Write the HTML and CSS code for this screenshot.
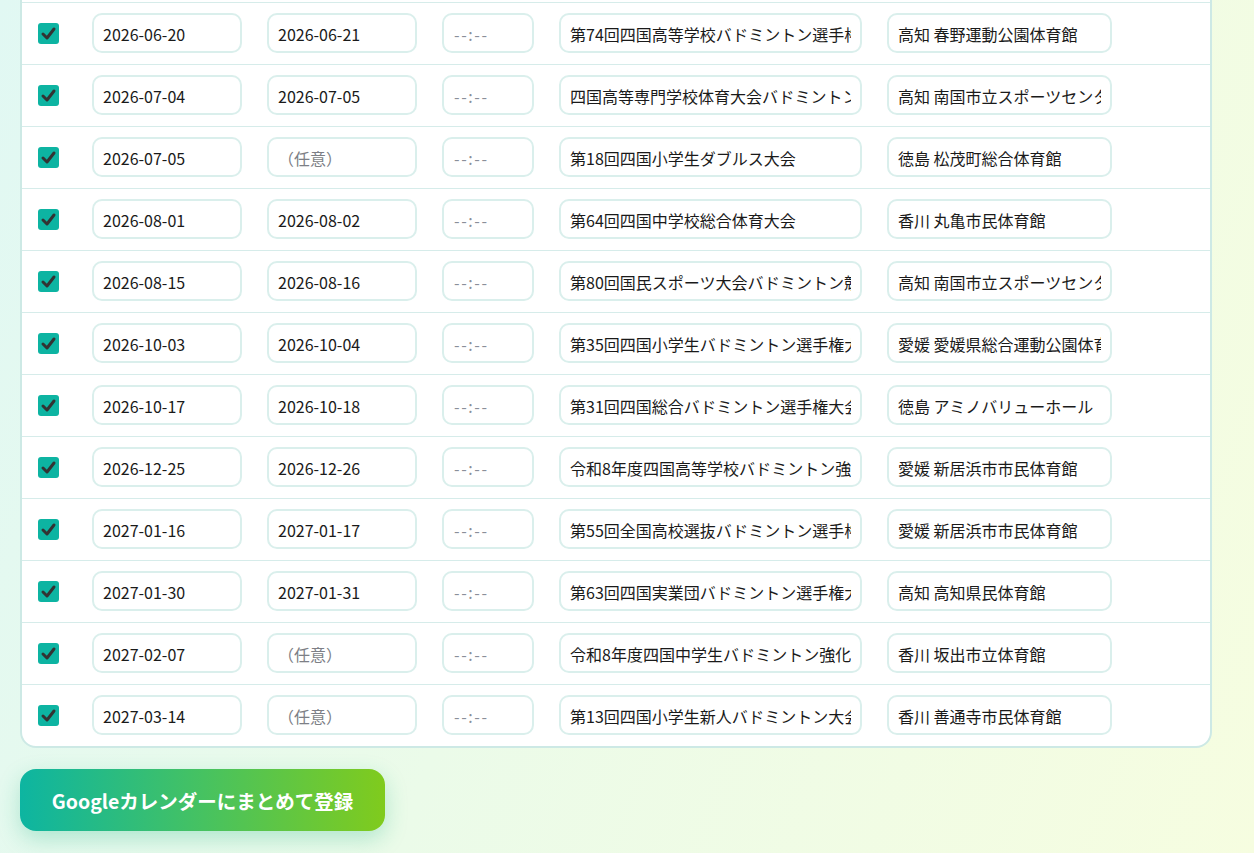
FILE: index.html
```html
<!DOCTYPE html>
<html lang="ja">
<head>
<meta charset="utf-8">
<title>大会一覧</title>
<link rel="stylesheet" href="styles.css">
</head>
<body>
<main class="page">
  <section class="card">
    <div class="row">
      <span class="check"><svg viewBox="0 0 21 21" width="21" height="21"><path d="M5 11 L9 15 L16 6" fill="none" stroke="#333" stroke-width="3" stroke-linecap="round" stroke-linejoin="round"/></svg></span>
      <input class="field" type="text" value="2026-06-13">
      <input class="field" type="text" value="2026-06-14">
      <input class="field time" type="text" placeholder="--:--">
      <input class="field" type="text" value="四国高等学校バドミントン選手権大会">
      <input class="field" type="text" value="徳島 鳴門アミノバリューホール">
    </div>
    <div class="row">
      <span class="check"><svg viewBox="0 0 21 21" width="21" height="21"><path d="M5 11 L9 15 L16 6" fill="none" stroke="#333" stroke-width="3" stroke-linecap="round" stroke-linejoin="round"/></svg></span>
      <input class="field" type="text" value="2026-06-20">
      <input class="field" type="text" value="2026-06-21">
      <input class="field time" type="text" placeholder="--:--">
      <input class="field" type="text" value="第74回四国高等学校バドミントン選手権大会">
      <input class="field" type="text" value="高知 春野運動公園体育館">
    </div>
    <div class="row">
      <span class="check"><svg viewBox="0 0 21 21" width="21" height="21"><path d="M5 11 L9 15 L16 6" fill="none" stroke="#333" stroke-width="3" stroke-linecap="round" stroke-linejoin="round"/></svg></span>
      <input class="field" type="text" value="2026-07-04">
      <input class="field" type="text" value="2026-07-05">
      <input class="field time" type="text" placeholder="--:--">
      <input class="field" type="text" value="四国高等専門学校体育大会バドミントン競技">
      <input class="field" type="text" value="高知 南国市立スポーツセンター">
    </div>
    <div class="row">
      <span class="check"><svg viewBox="0 0 21 21" width="21" height="21"><path d="M5 11 L9 15 L16 6" fill="none" stroke="#333" stroke-width="3" stroke-linecap="round" stroke-linejoin="round"/></svg></span>
      <input class="field" type="text" value="2026-07-05">
      <input class="field" type="text" placeholder="（任意）">
      <input class="field time" type="text" placeholder="--:--">
      <input class="field" type="text" value="第18回四国小学生ダブルス大会">
      <input class="field" type="text" value="徳島 松茂町総合体育館">
    </div>
    <div class="row">
      <span class="check"><svg viewBox="0 0 21 21" width="21" height="21"><path d="M5 11 L9 15 L16 6" fill="none" stroke="#333" stroke-width="3" stroke-linecap="round" stroke-linejoin="round"/></svg></span>
      <input class="field" type="text" value="2026-08-01">
      <input class="field" type="text" value="2026-08-02">
      <input class="field time" type="text" placeholder="--:--">
      <input class="field" type="text" value="第64回四国中学校総合体育大会">
      <input class="field" type="text" value="香川 丸亀市民体育館">
    </div>
    <div class="row">
      <span class="check"><svg viewBox="0 0 21 21" width="21" height="21"><path d="M5 11 L9 15 L16 6" fill="none" stroke="#333" stroke-width="3" stroke-linecap="round" stroke-linejoin="round"/></svg></span>
      <input class="field" type="text" value="2026-08-15">
      <input class="field" type="text" value="2026-08-16">
      <input class="field time" type="text" placeholder="--:--">
      <input class="field" type="text" value="第80回国民スポーツ大会バドミントン競技四国ブロック大会">
      <input class="field" type="text" value="高知 南国市立スポーツセンター">
    </div>
    <div class="row">
      <span class="check"><svg viewBox="0 0 21 21" width="21" height="21"><path d="M5 11 L9 15 L16 6" fill="none" stroke="#333" stroke-width="3" stroke-linecap="round" stroke-linejoin="round"/></svg></span>
      <input class="field" type="text" value="2026-10-03">
      <input class="field" type="text" value="2026-10-04">
      <input class="field time" type="text" placeholder="--:--">
      <input class="field" type="text" value="第35回四国小学生バドミントン選手権大会">
      <input class="field" type="text" value="愛媛 愛媛県総合運動公園体育館">
    </div>
    <div class="row">
      <span class="check"><svg viewBox="0 0 21 21" width="21" height="21"><path d="M5 11 L9 15 L16 6" fill="none" stroke="#333" stroke-width="3" stroke-linecap="round" stroke-linejoin="round"/></svg></span>
      <input class="field" type="text" value="2026-10-17">
      <input class="field" type="text" value="2026-10-18">
      <input class="field time" type="text" placeholder="--:--">
      <input class="field" type="text" value="第31回四国総合バドミントン選手権大会">
      <input class="field" type="text" value="徳島 アミノバリューホール">
    </div>
    <div class="row">
      <span class="check"><svg viewBox="0 0 21 21" width="21" height="21"><path d="M5 11 L9 15 L16 6" fill="none" stroke="#333" stroke-width="3" stroke-linecap="round" stroke-linejoin="round"/></svg></span>
      <input class="field" type="text" value="2026-12-25">
      <input class="field" type="text" value="2026-12-26">
      <input class="field time" type="text" placeholder="--:--">
      <input class="field" type="text" value="令和8年度四国高等学校バドミントン強化大会">
      <input class="field" type="text" value="愛媛 新居浜市市民体育館">
    </div>
    <div class="row">
      <span class="check"><svg viewBox="0 0 21 21" width="21" height="21"><path d="M5 11 L9 15 L16 6" fill="none" stroke="#333" stroke-width="3" stroke-linecap="round" stroke-linejoin="round"/></svg></span>
      <input class="field" type="text" value="2027-01-16">
      <input class="field" type="text" value="2027-01-17">
      <input class="field time" type="text" placeholder="--:--">
      <input class="field" type="text" value="第55回全国高校選抜バドミントン選手権大会四国地区予選">
      <input class="field" type="text" value="愛媛 新居浜市市民体育館">
    </div>
    <div class="row">
      <span class="check"><svg viewBox="0 0 21 21" width="21" height="21"><path d="M5 11 L9 15 L16 6" fill="none" stroke="#333" stroke-width="3" stroke-linecap="round" stroke-linejoin="round"/></svg></span>
      <input class="field" type="text" value="2027-01-30">
      <input class="field" type="text" value="2027-01-31">
      <input class="field time" type="text" placeholder="--:--">
      <input class="field" type="text" value="第63回四国実業団バドミントン選手権大会">
      <input class="field" type="text" value="高知 高知県民体育館">
    </div>
    <div class="row">
      <span class="check"><svg viewBox="0 0 21 21" width="21" height="21"><path d="M5 11 L9 15 L16 6" fill="none" stroke="#333" stroke-width="3" stroke-linecap="round" stroke-linejoin="round"/></svg></span>
      <input class="field" type="text" value="2027-02-07">
      <input class="field" type="text" placeholder="（任意）">
      <input class="field time" type="text" placeholder="--:--">
      <input class="field" type="text" value="令和8年度四国中学生バドミントン強化大会">
      <input class="field" type="text" value="香川 坂出市立体育館">
    </div>
    <div class="row">
      <span class="check"><svg viewBox="0 0 21 21" width="21" height="21"><path d="M5 11 L9 15 L16 6" fill="none" stroke="#333" stroke-width="3" stroke-linecap="round" stroke-linejoin="round"/></svg></span>
      <input class="field" type="text" value="2027-03-14">
      <input class="field" type="text" placeholder="（任意）">
      <input class="field time" type="text" placeholder="--:--">
      <input class="field" type="text" value="第13回四国小学生新人バドミントン大会">
      <input class="field" type="text" value="香川 善通寺市民体育館">
    </div>
  </section>
  <button class="submit" type="button">Googleカレンダーにまとめて登録</button>
</main>
</body>
</html>
```

FILE: styles.css
```css
html {
  min-height: 100%;
  background: linear-gradient(110deg, #e1f8f3 0%, #ebfbe9 45%, #f6fde0 100%);
}

body {
  margin: 0;
  font-family: "Noto Sans CJK JP", "Noto Sans", sans-serif;
  color: #222;
}

.page {
  padding: 0 42px 40px 20px;
  width: 1192px;
}

.card {
  margin-top: -61px;
  background: #fff;
  border: 2px solid #cde9e5;
  border-radius: 16px;
  overflow: hidden;
}

.row {
  display: grid;
  grid-template-columns: 29px 150px 150px 92px 303px 225px;
  column-gap: 25px;
  align-items: center;
  padding: 10px 0 11px 16px;
  border-bottom: 1px solid #d6ecea;
}

.row:last-child {
  border-bottom: none;
}

.check {
  width: 21px;
  height: 21px;
  background: #0db4a2;
  border-radius: 3px;
  display: flex;
}

.field {
  box-sizing: border-box;
  width: 100%;
  height: 40px;
  margin: 0;
  padding: 2px 9px 0;
  border: 2px solid #daefec;
  border-radius: 10px;
  background: #fff;
  font-family: "Noto Sans CJK JP", "Noto Sans", sans-serif;
  font-size: 16px;
  color: #1a1a1a;
  outline: none;
}

.field::placeholder {
  color: #7d7f86;
}

.time {
  padding-left: 10px;
  letter-spacing: 1.6px;
}

.time::placeholder {
  color: #8a8f99;
}

.submit {
  display: block;
  margin-top: 21px;
  width: 365px;
  height: 62px;
  border: none;
  border-radius: 16px;
  background: linear-gradient(90deg, #0db5a1 0%, #46c261 50%, #80cb1d 100%);
  color: #fff;
  font-family: "Noto Sans CJK JP", "Noto Sans", sans-serif;
  font-size: 19.5px;
  font-weight: 700;
  box-shadow: 0 8px 22px rgba(30, 180, 130, 0.28);
  cursor: pointer;
}
```
